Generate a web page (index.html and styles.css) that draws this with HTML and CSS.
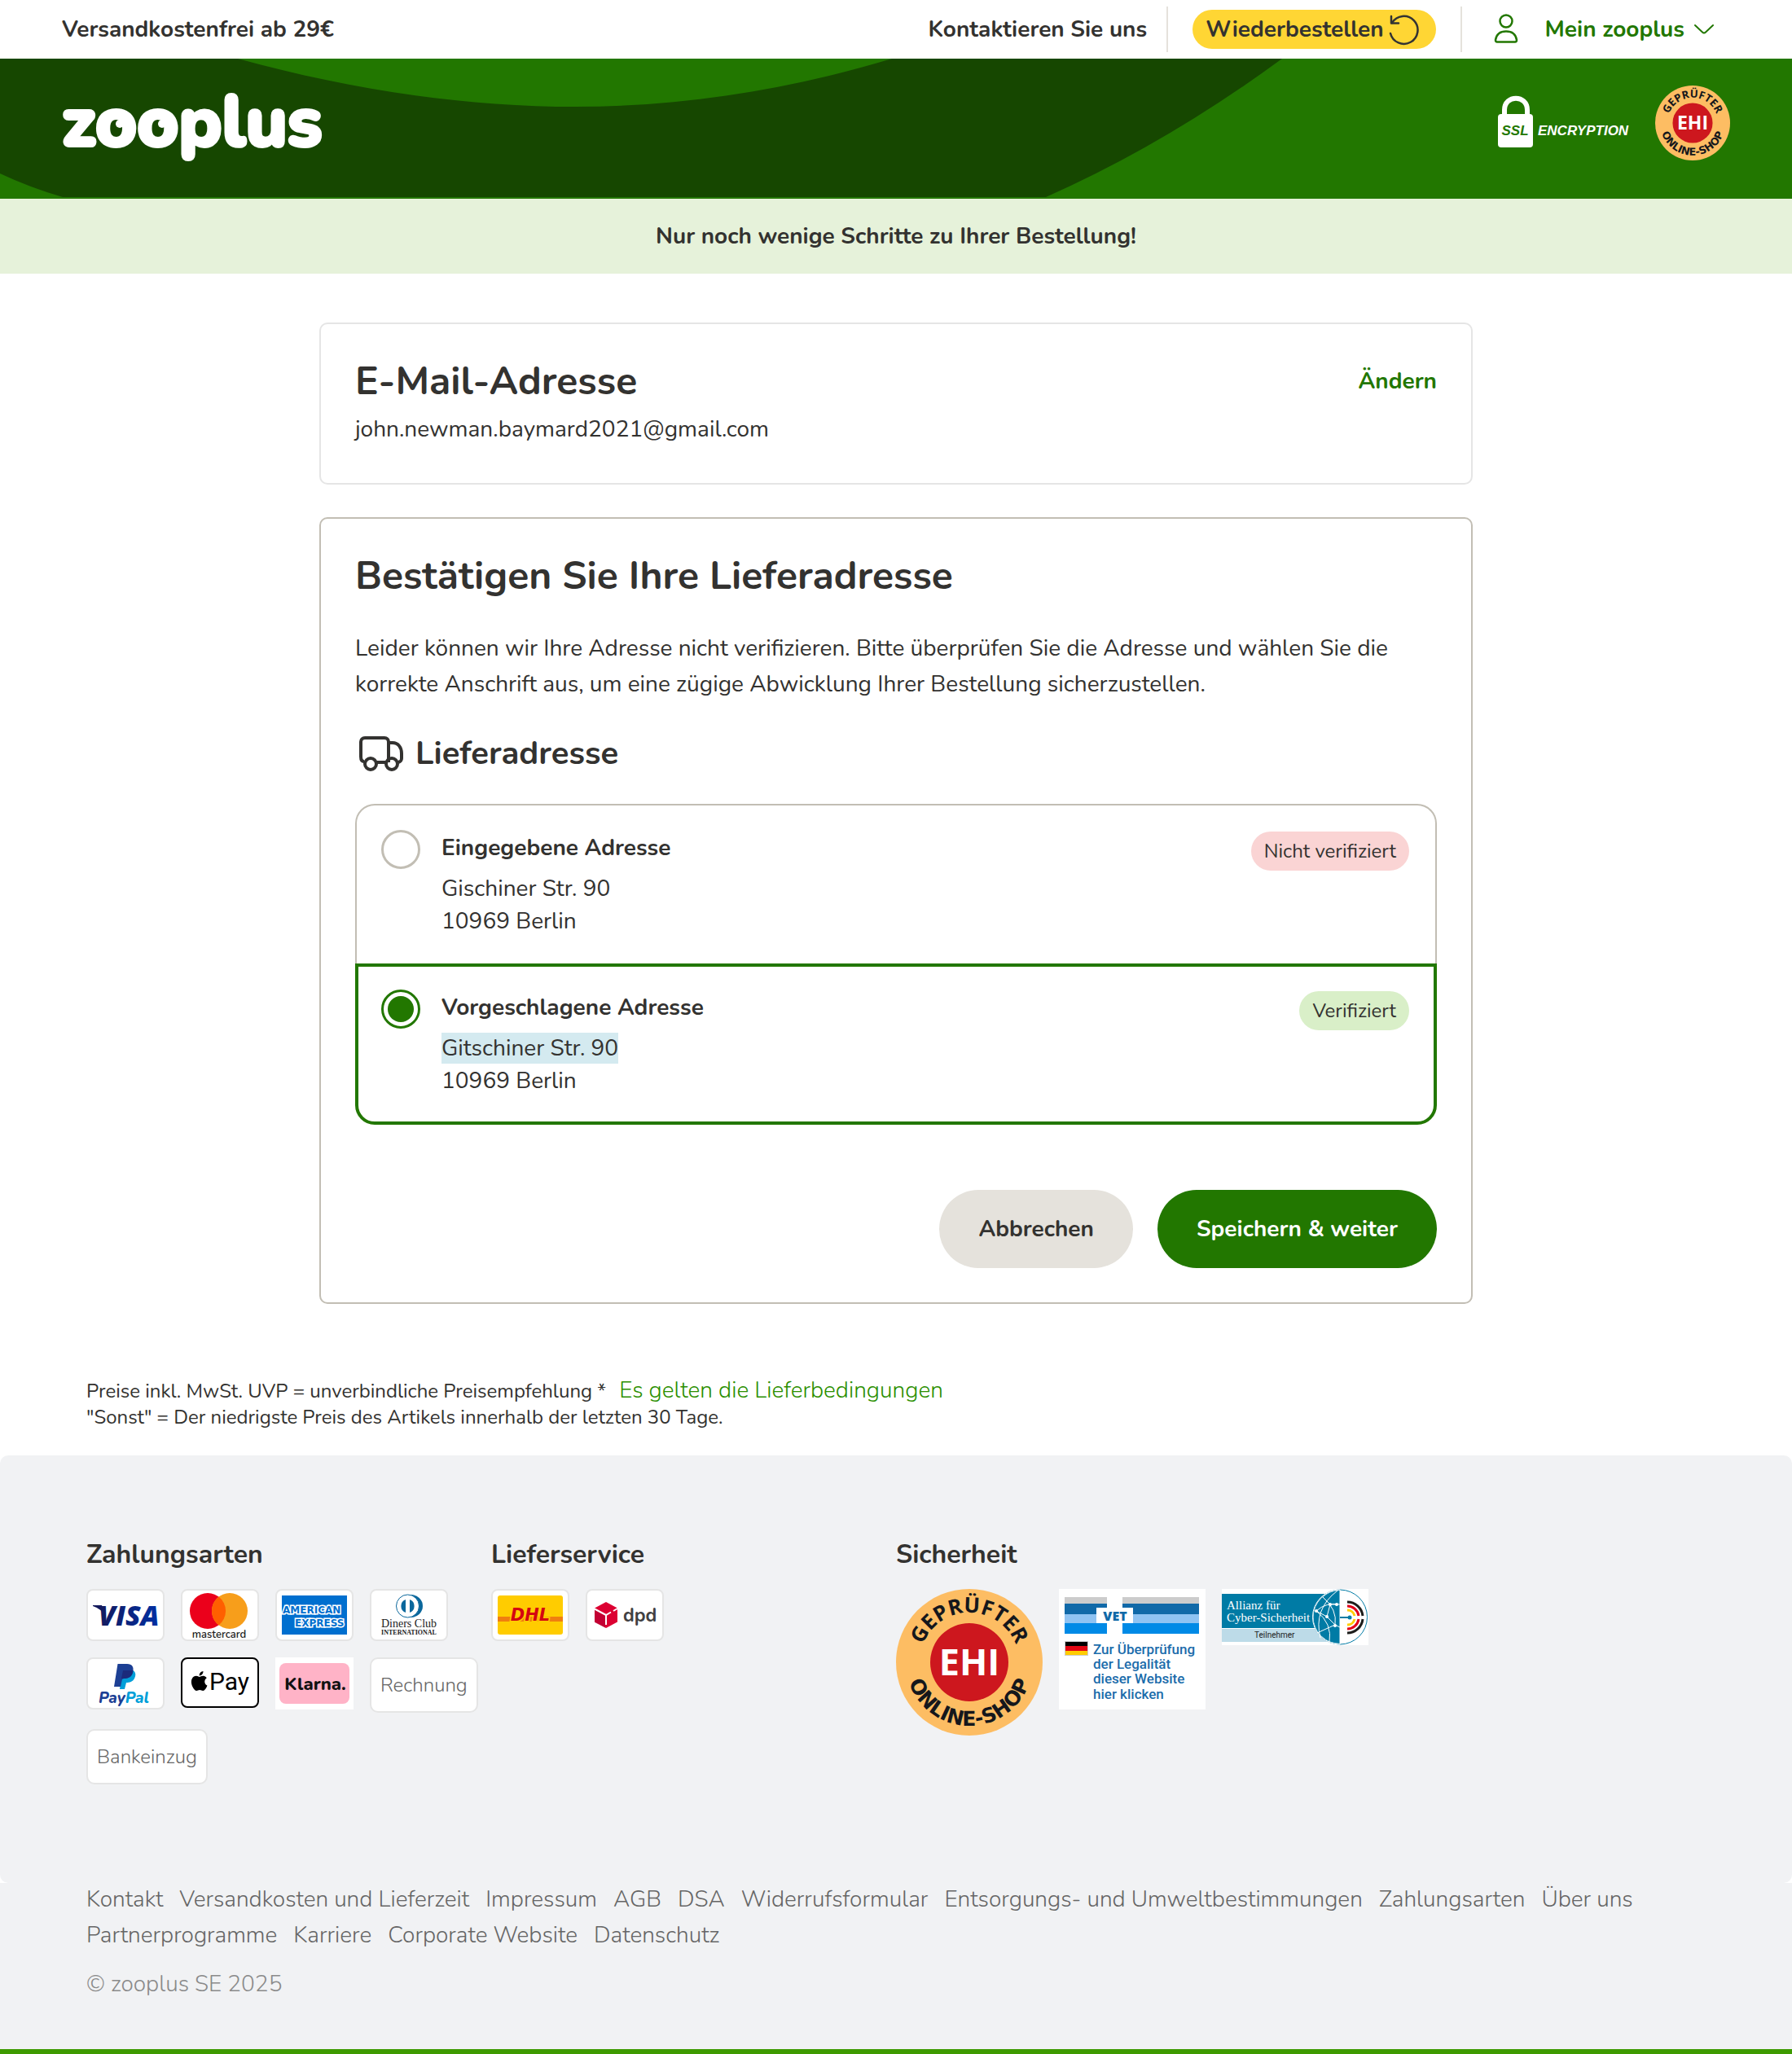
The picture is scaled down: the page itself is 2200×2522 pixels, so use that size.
FILE: index.html
```html
<!DOCTYPE html>
<html lang="de">
<head>
    <meta charset="UTF-8">
    <meta name="viewport" content="width=device-width, initial-scale=1.0">
    <title>Lieferadresse bestätigen | zooplus</title>
    <link rel="stylesheet" href="styles.css">
</head>
<body>

    <div class="topbar">
        <span>Versandkostenfrei ab 29€</span>
        <nav class="topbar-nav">
            <a href="#" class="topbar-contact">Kontaktieren Sie uns</a>
            <a href="#" class="reorder">Wiederbestellen
                <svg width="40" height="40" viewBox="0 0 40 40" fill="none" stroke="#333" stroke-width="2.500" stroke-linecap="round" stroke-linejoin="round">
                    <path d="M4 25 A17 17 0 1 0 6 12"/>
                    <path d="M5 4 V12.500 H14"/>
                </svg>
            </a>
            <a href="#" class="account">
                <svg width="40" height="44" viewBox="0 0 40 44" fill="none" stroke="#227700" stroke-width="2.500">
                    <circle cx="20" cy="12" r="7.500"/>
                    <path d="M7 35 C8 29 12 24.500 20 24.500 S32 29 33 35 C33 37 32 37.500 31 37.500 H9 C8 37.500 7 37 7 35 Z"/>
                </svg>
                <span>Mein zooplus</span>
                <svg width="24" height="14" viewBox="0 0 24 14" fill="none" stroke="#227700" stroke-width="2" stroke-linecap="round" stroke-linejoin="round">
                    <path d="M1 2 L10 10.500 Q12 12.500 14 10.500 L23 2"/>
                </svg>
            </a>
        </nav>
    </div>

    <header class="header">
        <svg class="header-shape" width="1574" height="170" viewBox="0 0 1574 170">
            <path fill="#164700" d="M0 0 H292 C430 38 570 59 707 59 C840 59 970 38 1095 0 H1574 Q1431 105 1284 170 H77 Q36 158 0 141 Z"/>
        </svg>
        <a href="#" class="logo" aria-label="zooplus">
            <svg width="360" height="140" viewBox="0 -30 360 140">
                <text x="0" y="70" class="logo-text">zooplus</text>
                <circle cx="71" cy="43" r="5" fill="#fff"/>
                <circle cx="123" cy="43" r="5" fill="#fff"/>
            </svg>
        </a>
        <div class="header-seals">
            <svg width="162" height="66" viewBox="0 0 162 66">
                <path d="M9 26 V18 C9 -1 37 -1 37 18 V26" fill="none" stroke="#fff" stroke-width="6"/>
                <rect x="1" y="23" width="43" height="41" rx="4" fill="#fff"/>
                <text x="22" y="49" text-anchor="middle" class="ssl-text" fill="#227700">SSL</text>
                <text x="50" y="49" class="ssl-text" fill="#fff">ENCRYPTION</text>
            </svg>
            <svg width="92" height="92" viewBox="0 0 180 180">
                <use href="#ehi-seal"/>
            </svg>
        </div>
    </header>

    <div class="banner">Nur noch wenige Schritte zu Ihrer Bestellung!</div>

    <main class="checkout">
        <section class="card card-light">
            <div class="card-head">
                <h2>E-Mail-Adresse</h2>
                <a href="#" class="change-link">Ändern</a>
            </div>
            <p class="email">john.newman.baymard2021@gmail.com</p>
        </section>

        <section class="card">
            <h2>Bestätigen Sie Ihre Lieferadresse</h2>
            <p class="intro">Leider können wir Ihre Adresse nicht verifizieren. Bitte überprüfen Sie die Adresse und wählen Sie die korrekte Anschrift aus, um eine zügige Abwicklung Ihrer Bestellung sicherzustellen.</p>

            <h3>
                <svg width="64" height="56" viewBox="0 0 64 56" fill="none" stroke="#333230" stroke-width="4" stroke-linejoin="round">
                    <path d="M11 38 C8 38 7 35 7 32 V14 C7 11 9 9 12 9 H36 C39 9 41 11 41 14 V39"/>
                    <path d="M41 15 H46 C53 15 57 21 57 28 V34 C57 37 56 38 53 39"/>
                    <path d="M27 39 H37"/>
                    <circle cx="19" cy="41" r="7"/>
                    <circle cx="45" cy="41" r="7"/>
                </svg>
                Lieferadresse
            </h3>

            <form>
                <div class="options">
                    <div class="option">
                        <input type="radio" id="addr-entered" name="address">
                        <label for="addr-entered">
                            <strong>Eingegebene Adresse</strong>
                            <span>Gischiner Str. 90</span><br>
                            <span>10969 Berlin</span>
                        </label>
                        <span class="badge badge-red">Nicht verifiziert</span>
                    </div>
                    <div class="option option-selected">
                        <input type="radio" id="addr-suggested" name="address" checked>
                        <label for="addr-suggested">
                            <strong>Vorgeschlagene Adresse</strong>
                            <span class="changed">Gitschiner Str. 90</span><br>
                            <span>10969 Berlin</span>
                        </label>
                        <span class="badge badge-green">Verifiziert</span>
                    </div>
                </div>

                <div class="actions">
                    <button type="button" class="btn btn-cancel">Abbrechen</button>
                    <button type="submit" class="btn btn-save">Speichern &amp; weiter</button>
                </div>
            </form>
        </section>
    </main>

    <div class="price-note">
        Preise inkl. MwSt. UVP = unverbindliche Preisempfehlung * <a href="#">Es gelten die Lieferbedingungen</a><br>
        "Sonst" = Der niedrigste Preis des Artikels innerhalb der letzten 30 Tage.
    </div>

    <footer>
        <div class="footer-top">
            <section>
                <h4>Zahlungsarten</h4>
                <div class="logos">
                    <!-- Visa -->
                    <svg class="pay" viewBox="2 2 92 60">
                        <defs>
                            <linearGradient id="visa-blue" x1="0" x2="1">
                                <stop offset="0" stop-color="#141a5c"/>
                                <stop offset="1" stop-color="#0030a4"/>
                            </linearGradient>
                        </defs>
                        <path d="M8 20 H19 L24 34 Q18 24 8 21 Z" fill="#141a5c"/>
                        <text x="15" y="45" font-family="Open Sans" font-weight="800" font-style="italic" font-size="34" fill="url(#visa-blue)">VISA</text>
                    </svg>
                    <!-- Mastercard -->
                    <svg class="pay" viewBox="2 2 92 60">
                        <circle cx="33" cy="27" r="22" fill="#eb001b"/>
                        <circle cx="60" cy="27" r="22" fill="#f79e1b"/>
                        <path d="M46.500 9.600 A22 22 0 0 1 46.500 44.400 A22 22 0 0 1 46.500 9.600 Z" fill="#ff5f00"/>
                        <text x="47" y="60" text-anchor="middle" font-family="Nunito" font-weight="600" font-size="13" fill="#222">mastercard</text>
                    </svg>
                    <!-- American Express -->
                    <svg class="pay" viewBox="2 2 92 60">
                        <rect x="8" y="8" width="80" height="48" fill="#006fcf"/>
                        <g font-family="DejaVu Sans" font-weight="700" font-size="12" fill="#006fcf" stroke="#fff" stroke-width="3" paint-order="stroke">
                            <text x="9" y="30">AMERICAN</text>
                            <text x="24" y="46">EXPRESS</text>
                        </g>
                    </svg>
                    <!-- Diners Club -->
                    <svg class="pay" viewBox="2 2 92 60">
                        <ellipse cx="50" cy="21" rx="15" ry="14" fill="#0a679c"/>
                        <circle cx="46.500" cy="21" r="14" fill="#fff" stroke="#0a679c"/>
                        <path d="M44 13 A8.500 8.500 0 0 0 44 29 Z M49 13 A8.500 8.500 0 0 1 49 29 Z" fill="#0a679c"/>
                        <text x="48" y="47" text-anchor="middle" font-family="Liberation Serif" font-size="14" fill="#222">Diners Club</text>
                        <text x="48" y="56" text-anchor="middle" font-family="Liberation Serif" font-size="8" font-weight="700" fill="#222">INTERNATIONAL</text>
                    </svg>
                    <!-- PayPal -->
                    <svg class="pay" viewBox="2 2 92 60">
                        <path d="M44 16 H57 C61 18 61 22 59 26 C57 30 53 31 49 31 L47 39 H41 Z" fill="#009fd9"/>
                        <path d="M38.500 8 H50 C56 8 59 12 57 18 C56 24 52 26 46 26 L44 27 L42 36 H34 Z" fill="#1c3f94"/>
                        <path d="M45 16 H57.500 C57 23 52 26 46 26 H43 Z" fill="#1b2a7b"/>
                        <text x="15" y="56" font-family="Nunito" font-weight="800" font-style="italic" font-size="19" fill="#1c3f94">Pay<tspan fill="#009fd9">Pal</tspan></text>
                    </svg>
                    <!-- Apple Pay -->
                    <svg class="pay pay-apple" viewBox="2 2 92 58">
                        <path transform="translate(10.700 17)" d="M12.152 6.896c-.948 0-2.415-1.078-3.960-1.040-2.040.027-3.910 1.183-4.961 3.014-2.117 3.675-.546 9.103 1.519 12.090 1.013 1.454 2.208 3.090 3.792 3.039 1.520-.065 2.090-.987 3.935-.987 1.831 0 2.350.987 3.960.948 1.637-.026 2.676-1.480 3.676-2.948 1.156-1.688 1.636-3.325 1.662-3.415-.039-.013-3.182-1.221-3.220-4.857-.026-3.040 2.480-4.494 2.597-4.559-1.429-2.090-3.623-2.324-4.390-2.376-2-.156-3.675 1.090-4.610 1.090zM15.530 3.830c.843-1.012 1.400-2.427 1.245-3.830-1.207.052-2.662.805-3.532 1.818-.780.896-1.454 2.338-1.273 3.714 1.338.104 2.715-.688 3.559-1.701"/>
                        <text x="35" y="40" font-family="Roboto" font-weight="400" font-size="30">Pay</text>
                    </svg>
                    <!-- Klarna -->
                    <svg class="pay pay-plain" viewBox="0 0 96 64">
                        <rect x="5" y="7" width="86" height="50" rx="8" fill="#ffb3c7"/>
                        <text x="49" y="40" text-anchor="middle" font-family="Nunito" font-weight="800" font-size="22" fill="#111">Klarna.</text>
                    </svg>
                    <span class="chip">Rechnung</span>
                    <span class="chip">Bankeinzug</span>
                </div>
            </section>

            <section>
                <h4>Lieferservice</h4>
                <div class="logos">
                    <!-- DHL -->
                    <svg class="pay" viewBox="2 2 92 60">
                        <rect x="8" y="8" width="80" height="48" rx="3" fill="#fc0"/>
                        <path d="M8 35 H88 M8 37 H88 M8 39 H88" stroke="#e0301e"/>
                        <text x="48" y="39" text-anchor="middle" font-family="DejaVu Sans" font-weight="700" font-style="italic" font-size="21" fill="#d40511" stroke="#fc0" stroke-width="3" paint-order="stroke">DHL</text>
                    </svg>
                    <!-- dpd -->
                    <svg class="pay" viewBox="2 2 92 60">
                        <path d="M25 16 L39 23.500 V40.500 L25 48 L11 40.500 V23.500 Z" fill="#dc0032"/>
                        <path d="M11 41 L24 47.500 V33 L11 25 Z" fill="#a90034" opacity=".5"/>
                        <path d="M10 24 L25 32 L31 28.500 M34 27 L40 23.500 M25 31.500 V44" fill="none" stroke="#fff" stroke-width="2"/>
                        <text x="46" y="40" font-family="Nunito" font-weight="700" font-size="23" fill="#414042">dpd</text>
                    </svg>
                </div>
            </section>

            <section class="security">
                <h4>Sicherheit</h4>
                <div class="logos">
                    <!-- EHI seal -->
                    <svg width="180" height="180" viewBox="0 0 180 180">
                        <defs>
                            <path id="arc-top" d="M29 90 A61 61 0 0 1 151 90"/>
                            <path id="arc-bottom" d="M12 90 A78 78 0 0 0 168 90"/>
                        </defs>
                        <g id="ehi-seal">
                            <circle cx="90" cy="90" r="90" fill="#fdbd63"/>
                            <circle cx="90" cy="90" r="48" fill="#cd171e"/>
                            <text x="90" y="106" text-anchor="middle" font-family="Open Sans" font-weight="700" font-size="45" fill="#fff">EHI</text>
                            <g font-weight="700" text-anchor="middle" fill="#15171c">
                                <text font-family="Open Sans" font-size="26"><textPath href="#arc-top" startOffset="50%">GEPRÜFTER</textPath></text>
                                <text font-family="DejaVu Sans" font-size="25"><textPath href="#arc-bottom" startOffset="50%">ONLINE-SHOP</textPath></text>
                            </g>
                        </g>
                    </svg>
                    <!-- EU vet pharmacy -->
                    <svg width="180" height="148" viewBox="0 0 180 148">
                        <rect width="180" height="148" fill="#fff"/>
                        <path d="M7 10 H59 V18 H7 Z M78 10 H172 V18 H78 Z" fill="#ccc"/>
                        <path d="M7 18 H59 V31 H7 Z M78 18 H172 V31 H78 Z" fill="#1069a8"/>
                        <path d="M7 31 H59 V42 H7 Z M78 31 H172 V42 H78 Z" fill="#8fc3f2"/>
                        <path d="M7 42 H59 V55 H7 Z M78 42 H172 V55 H78 Z" fill="#008ae6"/>
                        <rect x="46" y="23" width="45" height="19" fill="#fff"/>
                        <text x="69" y="39" text-anchor="middle" font-family="Open Sans" font-weight="800" font-size="16" fill="#1069a8">VET</text>
                        <rect x="7" y="64" width="29" height="18" fill="#ccc"/>
                        <path d="M8 65 H35 V70 H8 Z" fill="#000"/>
                        <path d="M8 70 H35 V76 H8 Z" fill="#e30613"/>
                        <path d="M8 76 H35 V81 H8 Z" fill="#fc0"/>
                        <g font-family="Roboto" font-weight="500" font-size="17" fill="#1b6cab">
                            <text x="42" y="80">Zur Überprüfung</text>
                            <text x="42" y="98">der Legalität</text>
                            <text x="42" y="116">dieser Website</text>
                            <text x="42" y="135">hier klicken</text>
                        </g>
                    </svg>
                    <!-- Allianz für Cyber-Sicherheit -->
                    <svg width="180" height="69" viewBox="0 0 180 69">
                        <rect width="180" height="69" fill="#fff"/>
                        <rect y="6" width="145" height="42" fill="#007ba5"/>
                        <rect y="49" width="145" height="16" fill="#bddbe8"/>
                        <g font-family="Liberation Serif" font-size="15" fill="#fff">
                            <text x="6" y="25">Allianz für</text>
                            <text x="6" y="40">Cyber-Sicherheit</text>
                        </g>
                        <text x="40" y="60" font-family="Roboto" font-size="10" fill="#222">Teilnehmer</text>
                        <circle cx="145" cy="34.500" r="33.500" fill="#fff" stroke="#007ba5"/>
                        <path d="M145 2 A32.500 32.500 0 0 0 145 67 Z" fill="#007ba5"/>
                        <g fill="none" stroke="#fff">
                            <path d="M145 1 A33.500 33.500 0 0 0 145 68 Z"/>
                            <path d="M142 2 Q112 25 121 60"/>
                            <path d="M116 27 Q136 42 132 66"/>
                            <path d="M116 27 Q128 16 145 19"/>
                            <path d="M124 10 Q142 25 139 44"/>
                            <path d="M116 27 L129 34 L139 44 L145 47 M129 34 L133 19 L141 19 M139 44 L117 54"/>
                        </g>
                        <g fill="#fff">
                            <circle cx="116" cy="27" r="2"/>
                            <circle cx="133" cy="19" r="2"/>
                            <circle cx="129" cy="34" r="2"/>
                            <circle cx="139" cy="45" r="2"/>
                            <circle cx="141" cy="19" r="2"/>
                        </g>
                        <path d="M145 35 H156" stroke="#007ba5" stroke-width="2"/>
                        <circle cx="157" cy="35" r="2.500" fill="#007ba5"/>
                        <g fill="none" stroke-width="3">
                            <path d="M154 16 A19 19 0 0 1 173 33 M154 54 A19 19 0 0 0 173 37" stroke="#1d1d1b"/>
                            <path d="M154 21 A14 14 0 0 1 168 33 M154 49 A14 14 0 0 0 168 37" stroke="#e2001a"/>
                            <path d="M154 26 A9 9 0 0 1 163 33 M154 44 A9 9 0 0 0 163 37" stroke="#fc0"/>
                        </g>
                    </svg>
                </div>
            </section>
        </div>

        <div class="footer-bottom">
            <nav class="footer-links">
                <a href="#">Kontakt</a>
                <a href="#">Versandkosten und Lieferzeit</a>
                <a href="#">Impressum</a>
                <a href="#">AGB</a>
                <a href="#">DSA</a>
                <a href="#">Widerrufsformular</a>
                <a href="#">Entsorgungs- und Umweltbestimmungen</a>
                <a href="#">Zahlungsarten</a>
                <a href="#">Über uns</a>
                <a href="#">Partnerprogramme</a>
                <a href="#">Karriere</a>
                <a href="#">Corporate Website</a>
                <a href="#">Datenschutz</a>
            </nav>
            <p class="copyright">© zooplus SE 2025</p>
        </div>
    </footer>

</body>
</html>
```

FILE: styles.css
```css
* {
    box-sizing: border-box;
}

body {
    margin: 0;
    font-family: Nunito, Lato, sans-serif;
    font-size: 28px;
    line-height: 40px;
    color: #333230;
    background: #fff;
}

a {
    color: inherit;
    text-decoration: none;
}

h2, h3, h4, p {
    margin: 0;
}

svg {
    display: block;
    flex-shrink: 0;
}

/* top bar */
.topbar {
    display: flex;
    justify-content: space-between;
    align-items: center;
    height: 72px;
    padding: 0 96px 0 76px;
    font-weight: 700;
}

.topbar-nav {
    display: flex;
    align-items: center;
}

.topbar-contact {
    line-height: 56px;
    padding-right: 24px;
    border-right: 2px solid #e5e2dc;
}

.reorder {
    display: flex;
    align-items: center;
    gap: 4px;
    height: 48px;
    margin: 0 30px;
    padding: 0 20px 0 16px;
    border-radius: 24px;
    background: #ffd634;
}

.account {
    display: flex;
    align-items: center;
    height: 56px;
    padding-left: 34px;
    border-left: 2px solid #e5e2dc;
    color: #227700;
}

.account span {
    margin: 0 12px 0 28px;
}

/* header */
.header {
    position: relative;
    display: flex;
    justify-content: space-between;
    height: 172px;
    padding: 33px 76px 0;
    background: #227700;
    overflow: hidden;
}

.header-shape {
    position: absolute;
    top: 0;
    left: 0;
}

.logo {
    position: relative;
    margin-top: -26px;
}

.logo-text {
    font-family: Nunito, Lato, sans-serif;
    font-weight: 800;
    font-size: 87px;
    fill: #fff;
    stroke: #fff;
    stroke-width: 4px;
    stroke-linejoin: round;
}

.header-seals {
    display: flex;
    align-items: flex-start;
    gap: 32px;
}

.header-seals svg:first-child {
    margin-top: 12px;
}

.ssl-text {
    font-family: "Liberation Sans", sans-serif;
    font-weight: 700;
    font-style: italic;
    font-size: 17px;
}

.banner {
    padding: 26px 20px;
    text-align: center;
    font-weight: 700;
    background: #e6f2da;
}

/* checkout */
.checkout {
    display: flex;
    flex-direction: column;
    gap: 40px;
    max-width: 1416px;
    margin: 60px auto 0;
}

.card {
    padding: 40px 42px 42px;
    border: 2px solid #c2beb4;
    border-radius: 10px;
}

.card-light {
    padding-bottom: 46px;
    border-color: #e5e5e5;
}

.card-head {
    display: flex;
    justify-content: space-between;
    align-items: center;
}

.card h2 {
    font-size: 48px;
    line-height: 60px;
}

.change-link {
    font-weight: 700;
    color: #227700;
}

.email {
    margin-top: 9px;
}

.intro {
    margin-top: 37px;
    line-height: 44px;
}

.card h3 {
    display: flex;
    align-items: center;
    gap: 10px;
    margin-top: 35px;
    font-size: 40px;
    line-height: 56px;
}

.options {
    margin-top: 34px;
}

.option {
    display: flex;
    align-items: flex-start;
    padding: 30px 32px 32px 30px;
    border: 2px solid #c2beb4;
    border-bottom: none;
    border-radius: 24px 24px 0 0;
}

.option-selected {
    padding: 28px 30px 30px 28px;
    border: 4px solid #227700;
    border-radius: 0 0 24px 24px;
}

.option input {
    appearance: none;
    flex-shrink: 0;
    width: 48px;
    height: 48px;
    margin: 0 26px 0 0;
    border: 3px solid #c2beb4;
    border-radius: 50%;
}

.option input:checked {
    border-color: #227700;
    background: #227700;
    background-clip: content-box;
    padding: 5px;
}

.option label {
    flex: 1;
    padding-top: 2px;
}

.option strong {
    display: block;
    margin-bottom: 10px;
}

.changed {
    background: #d4eaf0;
}

.badge {
    margin-top: 2px;
    padding: 0 16px;
    border-radius: 24px;
    font-size: 24px;
    line-height: 48px;
}

.badge-red {
    background: #fad4d4;
}

.badge-green {
    background: #d9efc8;
}

.actions {
    display: flex;
    justify-content: flex-end;
    gap: 30px;
    margin-top: 80px;
}

.btn {
    height: 96px;
    padding: 0 48px;
    border: none;
    border-radius: 48px;
    font-family: inherit;
    font-size: 28px;
    font-weight: 700;
    cursor: pointer;
}

.btn-cancel {
    color: #333230;
    background: #e5e2dc;
}

.btn-save {
    color: #fff;
    background: #227700;
}

/* notes and footer */
.price-note {
    margin: 90px 106px 31px;
    font-size: 24px;
    line-height: 32px;
}

.price-note a {
    margin-left: 10px;
    font-size: 28px;
    font-weight: 300;
    color: #2b8f00;
}

.footer-top {
    display: grid;
    grid-template-columns: 1fr 1fr 2fr;
    padding: 98px 106px 121px;
    border-radius: 10px;
    background: #f1f2f4;
}

.footer-top h4 {
    font-size: 32px;
    line-height: 48px;
}

.logos {
    display: flex;
    flex-wrap: wrap;
    align-items: flex-start;
    gap: 20px;
    margin-top: 18px;
}

.pay {
    width: 96px;
    height: 64px;
    border: 2px solid #e5e5e5;
    border-radius: 8px;
    background: #fff;
}

.pay-apple {
    height: 62px;
    border-color: #000;
}

.pay-plain {
    border: none;
    border-radius: 0;
}

.chip {
    padding: 0 11px;
    border: 2px solid #e5e5e5;
    border-radius: 10px;
    font-size: 24px;
    font-weight: 300;
    line-height: 64px;
    color: #666;
    background: #fff;
}

.footer-bottom {
    padding: 0 106px 60px;
    border-bottom: 6px solid #3d9a00;
    font-weight: 300;
    background: #f1f2f4;
}

.footer-links {
    display: flex;
    flex-wrap: wrap;
    gap: 4px 20px;
    color: #666;
}

.copyright {
    margin-top: 20px;
    color: #8a8a8a;
}
```
